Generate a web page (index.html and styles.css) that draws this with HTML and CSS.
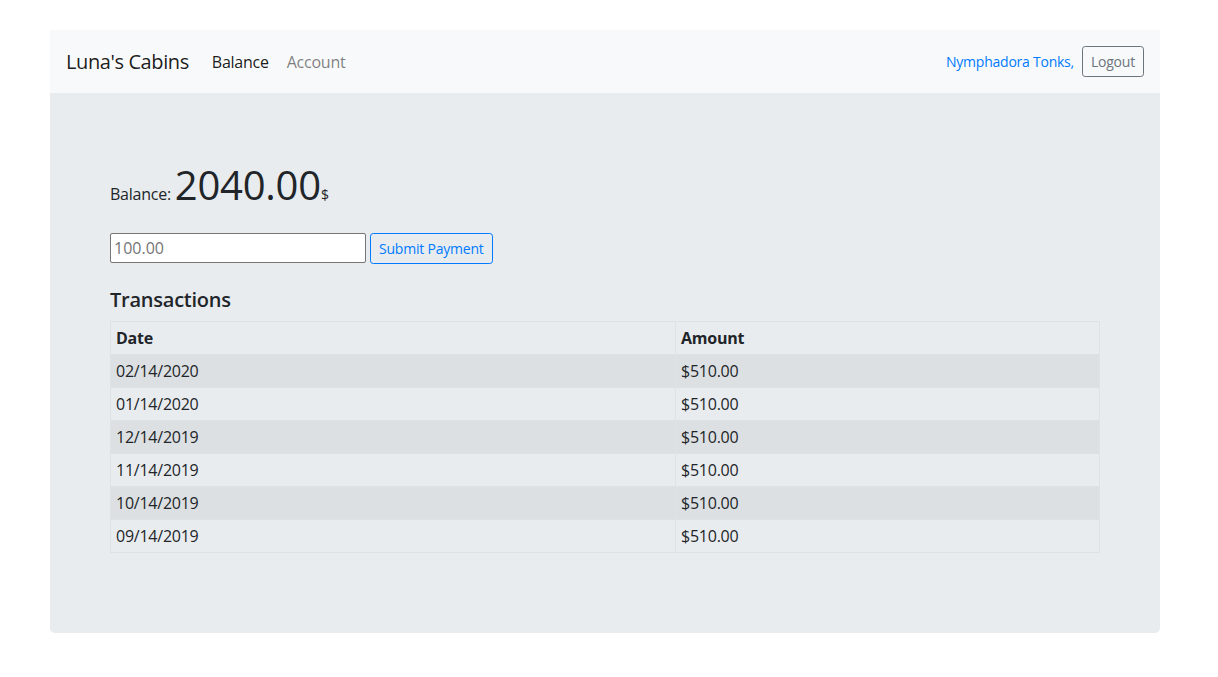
FILE: index.html
```html
<!DOCTYPE html>
<html lang="en">
<head>
<meta charset="utf-8">
<title>Luna's Cabins</title>
<link rel="stylesheet" href="styles.css">
</head>
<body>
<div class="container">
  <nav class="navbar">
    <div class="nav-left">
      <a class="brand" href="#">Luna's Cabins</a>
      <a class="nav-link active" href="#">Balance</a>
      <a class="nav-link" href="#">Account</a>
    </div>
    <div class="nav-right">
      <a class="user" href="#">Nymphadora Tonks,</a>
      <button class="btn btn-outline-secondary">Logout</button>
    </div>
  </nav>
  <main class="jumbotron">
    <p class="balance"><span class="balance-label">Balance:</span> <span class="balance-amount">2040.00</span><span class="balance-currency">$</span></p>
    <form class="pay-form">
      <input class="pay-input" type="text" placeholder="100.00">
      <button class="btn btn-outline-primary" type="button">Submit Payment</button>
    </form>
    <h5 class="section-title">Transactions</h5>
    <table class="table">
      <thead>
        <tr><th class="col-date">Date</th><th>Amount</th></tr>
      </thead>
      <tbody>
        <tr><td>02/14/2020</td><td>$510.00</td></tr>
        <tr><td>01/14/2020</td><td>$510.00</td></tr>
        <tr><td>12/14/2019</td><td>$510.00</td></tr>
        <tr><td>11/14/2019</td><td>$510.00</td></tr>
        <tr><td>10/14/2019</td><td>$510.00</td></tr>
        <tr><td>09/14/2019</td><td>$510.00</td></tr>
      </tbody>
    </table>
  </main>
</div>
</body>
</html>
```
FILE: styles.css
```css
* { box-sizing: border-box; }
html, body {
  margin: 0;
  padding: 0;
  background: #fff;
}
body {
  font-family: "Open Sans", "Noto Sans", sans-serif;
  font-size: 16px;
  line-height: 1.5;
  color: #212529;
  letter-spacing: -0.015em;
}
.container {
  width: 1110px;
  margin: 30px 0 0 50px;
}
.navbar {
  height: 63px;
  background: #f8f9fa;
  display: flex;
  align-items: center;
  justify-content: space-between;
  padding: 0 16px;
}
.nav-left {
  display: flex;
  align-items: center;
}
.brand {
  font-size: 20px;
  color: rgba(0,0,0,.9);
  text-decoration: none;
  margin-right: 15px;
  line-height: 30px;
  letter-spacing: -0.02em;
}
.nav-link {
  font-size: 16px;
  color: rgba(0,0,0,.5);
  text-decoration: none;
  padding: 8px 8px;
}
.nav-link.active { color: rgba(0,0,0,.9); margin-right: 2px; }
.nav-right {
  display: flex;
  align-items: center;
}
.user {
  color: #007bff;
  text-decoration: none;
  font-size: 14px;
  margin-right: 8px;
}
.btn {
  font-family: inherit;
  font-size: 14px;
  line-height: 21px;
  padding: 4px 8px;
  border-radius: 3.2px;
  background: transparent;
  cursor: pointer;
  letter-spacing: -0.015em;
}
.btn-outline-secondary {
  color: #6c757d;
  border: 1px solid #6c757d;
}
.btn-outline-primary {
  color: #007bff;
  border: 1px solid #007bff;
}
.jumbotron {
  background: #e9ecef;
  padding: 64px 60px;
  border-radius: 0 0 4.8px 4.8px;
}
.balance {
  margin: 0 0 16px;
  line-height: 56px;
  height: 60px;
}
.balance-label { font-size: 16px; }
.balance-amount {
  font-size: 40px;
  font-weight: 400;
}
.balance-currency { font-size: 14px; }
.pay-form {
  display: flex;
  align-items: center;
  margin: 0 0 24px;
}
.pay-input {
  width: 256px;
  height: 30px;
  border: 1px solid #767676;
  border-radius: 2px;
  background: #fff;
  padding: 1px 3px;
  font-family: inherit;
  font-size: 16px;
  color: #212529;
  margin-right: 4px;
  margin-top: -1px;
}
.pay-input::placeholder { color: #757575; }
.section-title {
  font-size: 20px;
  font-weight: 600;
  line-height: 1.2;
  margin: 0 0 9px;
}
.table {
  width: 100%;
  border-collapse: collapse;
  margin-bottom: 16px;
}
.table th, .table td {
  border: 1px solid #dee2e6;
  padding: 4.5px 5px;
  text-align: left;
  vertical-align: top;
  line-height: 23px;
}
.table th { font-weight: 700; }
.col-date { width: 565px; }
.table tbody tr:nth-child(odd) { background: rgba(0,0,0,.05); }
```
